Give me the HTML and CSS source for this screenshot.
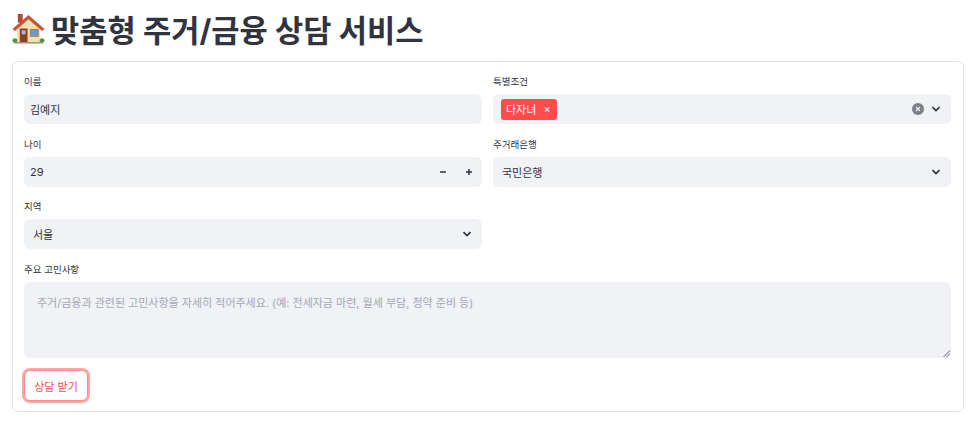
FILE: index.html
```html
<!DOCTYPE html>
<html lang="ko">
<head>
    <meta charset="UTF-8">
    <meta name="viewport" content="width=device-width, initial-scale=1.0">
    <title>맞춤형 주거/금융 상담 서비스</title>
    <link rel="stylesheet" href="styles.css">
</head>
<body>

    <!-- Title -->
    <h1 class="title">
        <svg class="house" viewBox="0 0 34 32" width="33" height="31">
            <rect x="6" y="1" width="5" height="9" fill="#b5462f"/>
            <rect x="5" y="13" width="24" height="17" fill="#f3dfb4"/>
            <path d="M17 4 L5 16 H29 Z" fill="#f3dfb4"/>
            <path d="M0.5 16.5 L17 2 L33.500 16.500 L31 18.500 L17 6.500 L3 18.500 Z" fill="#c4553a"/>
            <rect x="8" y="16" width="8" height="14" fill="#8c3f24"/>
            <rect x="10" y="18" width="4" height="4" fill="#9fc4dc"/>
            <rect x="19" y="17" width="8" height="7" fill="#5f9fd6" stroke="#a9793f" stroke-width="1"/>
            <circle cx="3" cy="28.500" r="2.500" fill="#4d9a35"/>
            <circle cx="31" cy="28.500" r="2.500" fill="#4d9a35"/>
            <rect x="2" y="30" width="30" height="1.500" fill="#9a8f7a"/>
        </svg>
        맞춤형 주거/금융 상담 서비스
    </h1>

    <form class="form-box">
        <div class="form-grid">

            <!-- Left column -->
            <div class="column">
                <div class="field">
                    <label>이름</label>
                    <input class="control" type="text" value="김예지">
                </div>
                <div class="field">
                    <label>나이</label>
                    <div class="control number-box">
                        <span class="grow">29</span>
                        <span class="step">
                            <svg viewBox="0 0 8 8" width="8" height="8"><path d="M1 4H7" stroke="#31333f" stroke-width="1.500"/></svg>
                        </span>
                        <span class="step">
                            <svg viewBox="0 0 8 8" width="8" height="8"><path d="M1 4H7M4 1V7" stroke="#31333f" stroke-width="1.500"/></svg>
                        </span>
                    </div>
                </div>
                <div class="field">
                    <label>지역</label>
                    <div class="control select-box">
                        <span class="grow">서울</span>
                        <svg class="chevron" viewBox="0 0 10 6" width="10" height="6"><path d="M1.500 1.200 L5 4.500 L8.500 1.200" fill="none" stroke="#31333f" stroke-width="1.700"/></svg>
                    </div>
                </div>
            </div>

            <!-- Right column -->
            <div class="column">
                <div class="field">
                    <label>특별조건</label>
                    <div class="control select-box tags-box">
                        <span class="tag">다자녀 <span class="tag-x">×</span></span>
                        <span class="grow"></span>
                        <svg class="clear" viewBox="0 0 12 12" width="12" height="12">
                            <circle cx="6" cy="6" r="6" fill="#7c7e89"/>
                            <path d="M4 4L8 8M8 4L4 8" stroke="#f0f2f6" stroke-width="1.200"/>
                        </svg>
                        <svg class="chevron" viewBox="0 0 10 6" width="10" height="6"><path d="M1.500 1.200 L5 4.500 L8.500 1.200" fill="none" stroke="#31333f" stroke-width="1.700"/></svg>
                    </div>
                </div>
                <div class="field">
                    <label>주거래은행</label>
                    <div class="control select-box">
                        <span class="grow">국민은행</span>
                        <svg class="chevron" viewBox="0 0 10 6" width="10" height="6"><path d="M1.500 1.200 L5 4.500 L8.500 1.200" fill="none" stroke="#31333f" stroke-width="1.700"/></svg>
                    </div>
                </div>
            </div>

        </div>

        <div class="field">
            <label>주요 고민사항</label>
            <textarea class="control worry" placeholder="주거/금융과 관련된 고민사항을 자세히 적어주세요. (예: 전세자금 마련, 월세 부담, 청약 준비 등)"></textarea>
        </div>

        <button class="submit" type="button">상담 받기</button>
    </form>

</body>
</html>
```

FILE: styles.css
```css
body {
    font-family: "Inter", "Noto Sans CJK KR", sans-serif;
    margin: 0;
    padding: 0 13px 12px 12px;
    background-color: #fff;
    color: #31333f;
}

/* Title */
.title {
    display: flex;
    align-items: center;
    gap: 6px;
    margin: 0;
    height: 61px;
    padding-bottom: 5px;
    box-sizing: border-box;
    font-size: 30.700px;
    font-weight: 700;
    white-space: nowrap;
}

/* Form */
.form-box {
    border: 1px solid #e3e4e8;
    border-radius: 6px;
    padding: 12px 11px 10px 11px;
    height: 327px;
}

.form-grid {
    display: grid;
    grid-template-columns: 458px 458px;
    column-gap: 11px;
}

.column {
    display: flex;
    flex-direction: column;
}

.field {
    display: flex;
    flex-direction: column;
    margin-bottom: 12.600px;
}

.field label {
    font-size: 9.500px;
    line-height: 15px;
    height: 20px;
}

.control {
    box-sizing: border-box;
    width: 100%;
    height: 30px;
    border: none;
    border-radius: 6px;
    background-color: #f0f2f6;
    color: #31333f;
    font-family: inherit;
    font-size: 11px;
    padding: 0 6px;
    outline: none;
}

.number-box,
.select-box {
    display: flex;
    align-items: center;
}

.select-box {
    padding-left: 9px;
    padding-right: 10px;
}

.grow {
    flex: 1;
}

/* Number input steps */
.step {
    display: flex;
    justify-content: center;
    width: 26px;
}

.number-box {
    padding-right: 0;
}

/* Multiselect */
.tags-box {
    padding-left: 8px;
}

.tag {
    display: inline-flex;
    align-items: center;
    gap: 7px;
    height: 21px;
    padding: 0 6px 0 5px;
    background-color: #ff4b4b;
    color: #fff;
    border-radius: 3px;
}

.tag-x {
    font-size: 11px;
}

.clear {
    margin-right: 7px;
}

/* Textarea */
.worry {
    height: 76px;
    width: 927px;
    padding: 12px 13px;
    resize: vertical;
}

.worry::placeholder {
    color: #a3a8b4;
    opacity: 1;
}

.worry::-webkit-resizer {
    background: linear-gradient(135deg, transparent 45%, #a9abb2 45%, #a9abb2 58%, transparent 58%, transparent 70%, #a9abb2 70%, #a9abb2 83%, transparent 83%) no-repeat right 1px bottom 1px / 7px 7px;
}

/* Submit button */
.submit {
    display: block;
    width: 64px;
    height: 31px;
    padding: 0;
    background-color: #fff;
    color: #ff4b4b;
    border: 1px solid #ff8a8a;
    border-radius: 6px;
    box-shadow: 0 0 0 2px rgba(255, 75, 75, 0.5);
    font-family: inherit;
    font-size: 11px;
    cursor: pointer;
}
```
